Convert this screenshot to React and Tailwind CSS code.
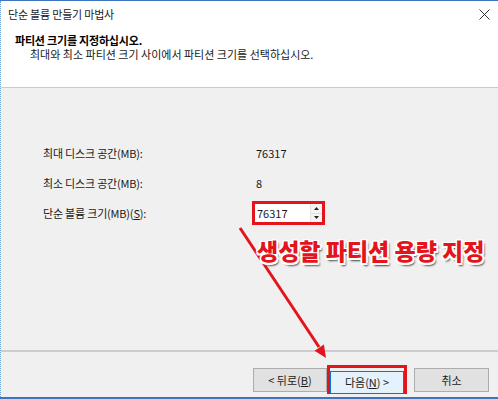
import React from 'react';

const font = { fontFamily: '"Noto Sans CJK KR", "Noto Sans", sans-serif' };

const Row = ({ label, children }) => (
    <div className="flex items-center h-[30px]">
        <div className="w-[255px] pl-[42px] text-[11px] tracking-[-0.2px] text-[#1a1a1a]">{label}</div>
        <div className="text-[11px] text-[#1a1a1a]">{children}</div>
    </div>
);

const App = () => {
    return (
        <div
            className="relative w-[498px] h-[399px] overflow-hidden bg-[#f0f0f0] border-t border-b-2 border-[#3d74c0]"
            style={font}
        >
            <div className="h-full flex flex-col border-l border-dotted border-[#6fa3d8]">
                {/* Header */}
                <div className="h-[87px] bg-white border-b border-[#cacaca] shrink-0">
                    <div className="h-[26px] flex items-center justify-between pl-[7px] pr-[7px]">
                        <span className="text-[11px] tracking-[-0.2px] text-[#1a1a1a]">단순 볼륨 만들기 마법사</span>
                        <svg width="11" height="11" viewBox="0 0 11 11" className="mr-[1px]">
                            <path d="M0.5 0.5 L10.5 10.5 M10.5 0.5 L0.5 10.5" stroke="#333" strokeWidth="1" />
                        </svg>
                    </div>
                    <div className="mt-[7px] pl-[14px] leading-[13px] text-[11px] font-bold tracking-[-0.2px] text-black">
                        파티션 크기를 지정하십시오.
                    </div>
                    <div className="mt-[1px] pl-[29px] leading-[13px] text-[11px] tracking-[0px] text-[#1a1a1a]">
                        최대와 최소 파티션 크기 사이에서 파티션 크기를 선택하십시오.
                    </div>
                </div>

                {/* Body */}
                <div className="h-[262px] pt-[50px] shrink-0">
                    <Row label="최대 디스크 공간(MB):">76317</Row>
                    <Row label="최소 디스크 공간(MB):">8</Row>
                    <Row label={<>단순 볼륨 크기(MB)(<span className="underline">S</span>):</>}>
                        <div className="-ml-[4px] w-[73px] h-[24px] border-[3px] border-[#e3141c] bg-white flex">
                            <div className="flex-1 pl-[2px] flex items-center text-[11px]">76317</div>
                            <div className="w-[12px] flex flex-col border-l border-[#e3e3e3]">
                                <div className="flex-1 flex items-center justify-center bg-[#f4f4f4] border-b border-[#e0e0e0]">
                                    <svg width="5" height="3" viewBox="0 0 5 3"><path d="M2.5 0 L5 3 L0 3 Z" fill="#222" /></svg>
                                </div>
                                <div className="flex-1 flex items-center justify-center bg-[#f4f4f4]">
                                    <svg width="5" height="3" viewBox="0 0 5 3"><path d="M0 0 L5 0 L2.5 3 Z" fill="#222" /></svg>
                                </div>
                            </div>
                        </div>
                    </Row>
                    <div className="relative z-10 mt-[10px] ml-[256px] h-[24px] leading-[24px] text-[23px] font-black tracking-[0px] text-[#e3141c] [text-shadow:1.5px_0_0_#fff,-1.5px_0_0_#fff,0_1.5px_0_#fff,0_-1.5px_0_#fff,1.5px_1.5px_0_#fff,-1.5px_-1.5px_0_#fff,1.5px_-1.5px_0_#fff,-1.5px_1.5px_0_#fff,2px_3px_2px_#444]">
                        생성할 파티션 용량 지정
                    </div>
                </div>

                <div className="h-[2px] bg-[#cdcdcd] shrink-0" />

                {/* Footer */}
                <div className="flex items-start pt-[13px] pl-[252px]">
                    <button className="mt-[3px] w-[74px] h-[24px] bg-[#e1e1e1] border border-[#adadad] text-[11px] text-[#1a1a1a]">
                        &lt; 뒤로(<span className="underline">B</span>)
                    </button>
                    <div className="w-[80px] h-[29px] border-[3px] border-[#e3141c]">
                        <button className="w-full h-full bg-[#e5f1fb] border border-[#0078d7] text-[11px] text-[#1a1a1a]">
                            다음(<span className="underline">N</span>) &gt;
                        </button>
                    </div>
                    <button className="mt-[3px] ml-[7px] w-[75px] h-[24px] bg-[#e1e1e1] border border-[#adadad] text-[11px] text-[#1a1a1a]">
                        취소
                    </button>
                </div>
            </div>

            {/* Annotation arrow */}
            <svg className="absolute left-0 top-0 pointer-events-none" width="498" height="399">
                <line x1="240" y1="227" x2="319" y2="346" stroke="#e3141c" strokeWidth="3" />
                <polygon points="326,357 314.6,349.8 323.9,343.6" fill="#e3141c" />
            </svg>
        </div>
    );
};

export default App;
